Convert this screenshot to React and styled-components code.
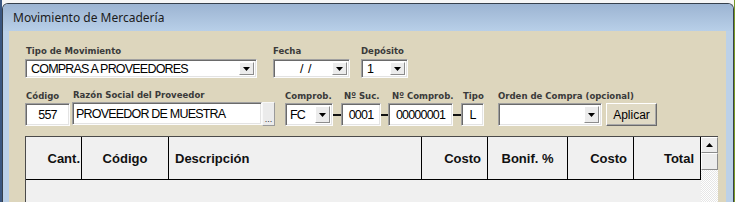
import React from "react";
import styled, { createGlobalStyle } from "styled-components";

const Global = createGlobalStyle`
  html, body { margin: 0; padding: 0; }
  body { width: 735px; height: 202px; overflow: hidden; background: #f4f4f4; }
  #root { width: 735px; height: 202px; }
`;

const Desktop = styled.div`
  width: 735px;
  height: 202px;
  box-sizing: border-box;
  padding: 3px 1px 0 2px;
  overflow: hidden;
  background:
    linear-gradient(to right, #3a5680 0 2px, transparent 2px),
    linear-gradient(to left, #7a9a2a 0 1px, transparent 1px),
    #f6f6f6;
`;

const Window = styled.div`
  height: 100%;
  box-sizing: border-box;
  border: 1px solid #36404c;
  border-bottom: none;
  border-radius: 6px 6px 0 0;
  background: #bcd1e8;
  display: flex;
  flex-direction: column;
  overflow: hidden;
`;

const TitleBar = styled.div`
  height: 27px;
  flex: none;
  display: flex;
  align-items: center;
  padding-left: 10px;
  background: linear-gradient(to bottom, #9cb4d2, #b8cfe8);
  font-family: "Noto Sans", "Open Sans", sans-serif;
  font-size: 12px;
  color: #1b1b1b;
`;

const Frame = styled.div`
  flex: 1;
  display: flex;
  padding: 0 7px 0 6px;
  min-height: 0;
`;

const Panel = styled.div`
  flex: 1;
  display: flex;
  flex-direction: column;
  background: #ddd6bd;
  padding: 13px 8px 0 16px;
  min-height: 0;
`;

const Row = styled.div`
  display: flex;
  align-items: flex-end;
  margin-top: ${(p) => p.$top || 0}px;
`;

const Field = styled.div`
  display: flex;
  flex-direction: column;
  gap: ${(p) => p.$gap ?? 2}px;
  margin-left: ${(p) => p.$ml || 0}px;
`;

const Label = styled.div`
  width: 0;
  height: 13px;
  line-height: 13px;
  padding-left: ${(p) => p.$pl || 0}px;
  font-family: "DejaVu Sans Condensed", "DejaVu Sans", sans-serif;
  font-stretch: condensed;
  font-weight: bold;
  font-size: 9.5px;
  color: #3a3a3a;
  white-space: nowrap;
  overflow: visible;
`;

const Sunken = styled.div`
  box-sizing: border-box;
  width: ${(p) => p.$w}px;
  height: ${(p) => p.$h}px;
  background: #fff;
  border: 1px solid;
  border-color: #a0a0a0 #fcfcfc #fcfcfc #a0a0a0;
  box-shadow: inset 1px 1px 0 #6a6a6a, inset -1px -1px 0 #e3e3e3;
  display: flex;
  align-items: center;
  justify-content: ${(p) => (p.$center ? "center" : "flex-start")};
  padding: 2px;
  font-family: "Liberation Sans", Arial, sans-serif;
  font-size: 12.5px;
  letter-spacing: -0.8px;
  color: #000;
  white-space: pre;
`;

const ComboText = styled.span`
  flex: 1;
  padding-left: ${(p) => p.$pl ?? 3}px;
  white-space: pre;
`;

const DropButton = styled.span`
  width: 15px;
  align-self: stretch;
  box-sizing: border-box;
  background: #ececec;
  border: 1px solid;
  border-color: #ffffff #8c8c8c #8c8c8c #ffffff;
  display: flex;
  align-items: center;
  justify-content: center;
`;

const Arrow = ({ up }) => (
  <svg width="7" height="4" viewBox="0 0 7 4">
    <path d={up ? "M0 4h7L3.5 0z" : "M0 0h7L3.5 4z"} fill="#000" />
  </svg>
);

const Combo = ({ w, h, text, pl }) => (
  <Sunken $w={w} $h={h}>
    <ComboText $pl={pl}>{text}</ComboText>
    <DropButton>
      <Arrow />
    </DropButton>
  </Sunken>
);

const Inline = styled.div`
  display: flex;
  align-items: flex-start;
`;

const EllipsisButton = styled.div`
  width: 13px;
  height: 24px;
  box-sizing: border-box;
  background: #ebebeb;
  border: 1px solid;
  border-color: #f8f8f8 #9a9a9a #9a9a9a #f8f8f8;
  display: flex;
  align-items: flex-end;
  justify-content: center;
  font-family: "Liberation Sans", Arial, sans-serif;
  font-size: 9px;
  line-height: 12px;
  color: #333;
`;

const Dash = styled.div`
  width: ${(p) => p.$w}px;
  height: 23px;
  display: flex;
  align-items: center;
  &::before {
    content: "";
    display: block;
    width: 100%;
    height: 2px;
    background: #111;
  }
`;

const Button = styled.div`
  box-sizing: border-box;
  width: 51px;
  height: 23px;
  margin-left: 4px;
  background: #e0dac5;
  border: 1px solid;
  border-color: #ffffff #6a6a6a #6a6a6a #ffffff;
  box-shadow: inset -1px -1px 0 #a8a8a8;
  display: flex;
  align-items: center;
  justify-content: center;
  font-family: "Liberation Sans", Arial, sans-serif;
  font-size: 12px;
  color: #000;
`;

const Grid = styled.div`
  flex: 1;
  display: flex;
  margin-top: 10px;
  border-top: 1px solid #4a4a4a;
  border-left: 1px solid #4a4a4a;
  min-height: 0;
`;

const Table = styled.div`
  width: 675px;
  display: flex;
  flex-direction: column;
  background: #f0f0f0;
`;

const Header = styled.div`
  display: grid;
  grid-template-columns: 56px 87px 253px 66px 80px 66px 67px;
  height: 43px;
  box-sizing: border-box;
  border-bottom: 1px solid #000;
`;

const HeadCell = styled.div`
  box-sizing: border-box;
  border-right: 1px solid #000;
  display: flex;
  align-items: center;
  justify-content: ${(p) => p.$align || "flex-start"};
  padding: 0 ${(p) => p.$pr ?? 6}px 0 ${(p) => p.$pl ?? 6}px;
  font-family: "Liberation Sans", Arial, sans-serif;
  font-weight: bold;
  font-size: 13px;
  color: #111;
  white-space: nowrap;
`;

const Scrollbar = styled.div`
  width: 17px;
  display: flex;
  flex-direction: column;
  background-color: #fff;
  background-image: repeating-conic-gradient(#ffffff 0 25%, #e6e6e6 0 50%);
  background-size: 2px 2px;
`;

const ScrollPart = styled.div`
  height: ${(p) => p.$h}px;
  flex: none;
  box-sizing: border-box;
  background: #ececec;
  border: 1px solid;
  border-color: #ffffff #8c8c8c #8c8c8c #ffffff;
  display: flex;
  align-items: center;
  justify-content: center;
`;

export default function App() {
  return (
    <>
      <Global />
      <Desktop>
        <Window>
          <TitleBar>Movimiento de Mercadería</TitleBar>
          <Frame>
            <Panel>
              <Row>
                <Field>
                  <Label $pl={1}>Tipo de Movimiento</Label>
                  <Combo w={232} h={19} text="COMPRAS A PROVEEDORES" />
                </Field>
                <Field $ml={16}>
                  <Label>Fecha</Label>
                  <Combo w={77} h={19} text={"/  /"} pl={24} />
                </Field>
                <Field $ml={11}>
                  <Label>Depósito</Label>
                  <Combo w={47} h={19} text="1" />
                </Field>
              </Row>
              <Row $top={10}>
                <Field $gap={1}>
                  <Label $pl={1}>Código</Label>
                  <Sunken $w={45} $h={23} $center>557</Sunken>
                </Field>
                <Field $gap={1} $ml={2}>
                  <Label $pl={1}>Razón Social del Proveedor</Label>
                  <Inline>
                    <Sunken $w={190} $h={23}>
                      <ComboText $pl={1}>PROVEEDOR DE MUESTRA</ComboText>
                    </Sunken>
                    <EllipsisButton>...</EllipsisButton>
                  </Inline>
                </Field>
                <Field $gap={1} $ml={10}>
                  <Label>Comprob.</Label>
                  <Combo w={48} h={23} text="FC" pl={2} />
                </Field>
                <Dash $w={8} />
                <Field $gap={1}>
                  <Label $pl={3}>Nº Suc.</Label>
                  <Sunken $w={40} $h={23} $center>0001</Sunken>
                </Field>
                <Dash $w={7} />
                <Field $gap={1}>
                  <Label $pl={4}>Nº Comprob.</Label>
                  <Sunken $w={65} $h={23} $center>00000001</Sunken>
                </Field>
                <Dash $w={8} />
                <Field $gap={1}>
                  <Label $pl={2}>Tipo</Label>
                  <Sunken $w={23} $h={23} $center>L</Sunken>
                </Field>
                <Field $gap={1} $ml={14}>
                  <Label>Orden de Compra (opcional)</Label>
                  <Combo w={104} h={23} text="" />
                </Field>
                <Button>Aplicar</Button>
              </Row>
              <Grid>
                <Table>
                  <Header>
                    <HeadCell $align="flex-end" $pr={1}>Cant.</HeadCell>
                    <HeadCell $align="center">Código</HeadCell>
                    <HeadCell>Descripción</HeadCell>
                    <HeadCell $align="flex-end">Costo</HeadCell>
                    <HeadCell $align="center">Bonif. %</HeadCell>
                    <HeadCell $align="flex-end">Costo</HeadCell>
                    <HeadCell $align="flex-end">Total</HeadCell>
                  </Header>
                </Table>
                <Scrollbar>
                  <ScrollPart $h={16}>
                    <Arrow up />
                  </ScrollPart>
                  <ScrollPart $h={17} />
                </Scrollbar>
              </Grid>
            </Panel>
          </Frame>
        </Window>
      </Desktop>
    </>
  );
}
